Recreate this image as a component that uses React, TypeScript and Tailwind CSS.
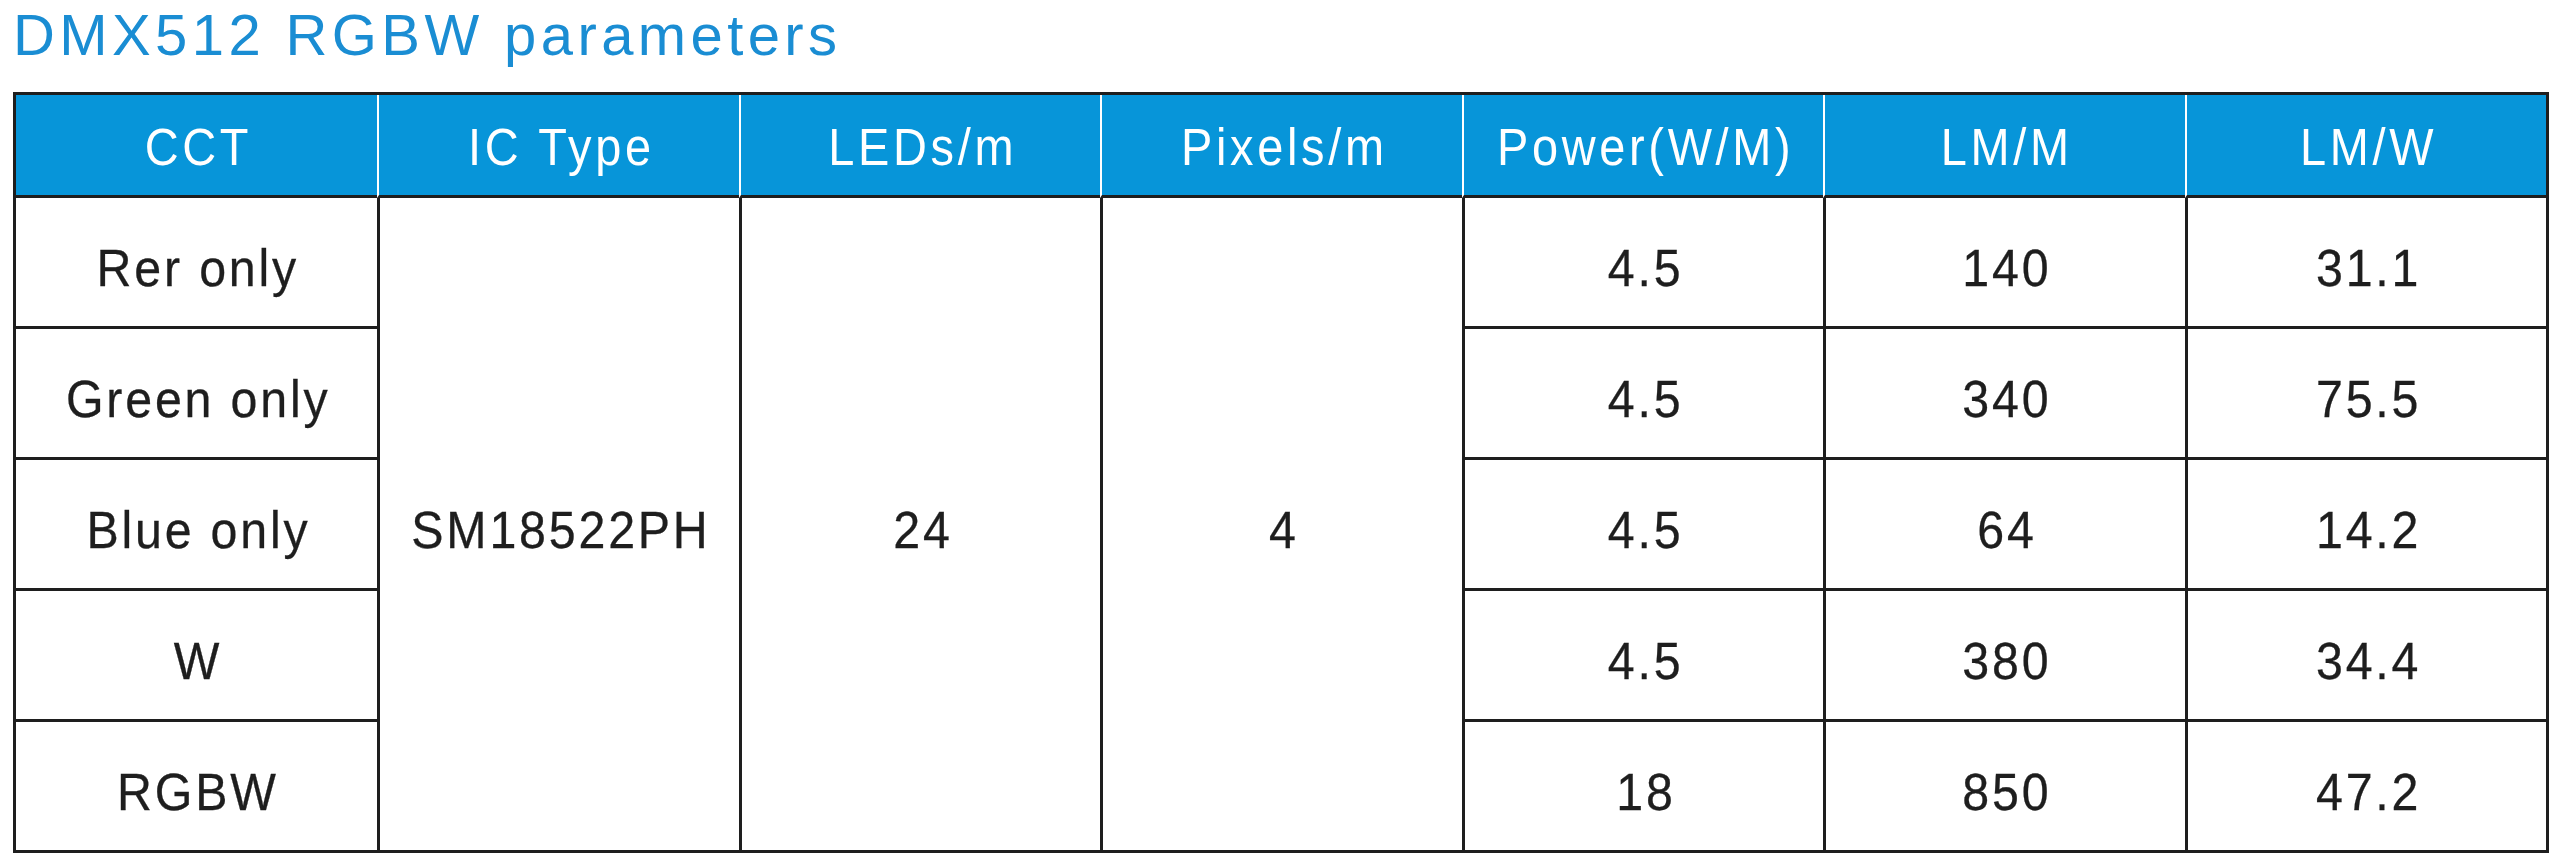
import React from "react";

const headers = ["CCT", "IC Type", "LEDs/m", "Pixels/m", "Power(W/M)", "LM/M", "LM/W"];
const rows = [
  { cct: "Rer only", p: "4.5", lm: "140", lmw: "31.1" },
  { cct: "Green only", p: "4.5", lm: "340", lmw: "75.5" },
  { cct: "Blue only", p: "4.5", lm: "64", lmw: "14.2" },
  { cct: "W", p: "4.5", lm: "380", lmw: "34.4" },
  { cct: "RGBW", p: "18", lm: "850", lmw: "47.2" },
];

const rowStarts = ["row-start-2", "row-start-3", "row-start-4", "row-start-5", "row-start-6"];

function T({ children }: { children: React.ReactNode }) {
  return (
    <span className="inline-block whitespace-nowrap [transform:scaleX(0.93)] mr-[-3px]">{children}</span>
  );
}

function H({ children }: { children: React.ReactNode }) {
  return (
    <span className="inline-block whitespace-nowrap [transform:scaleX(0.92)] mr-[-4px]">{children}</span>
  );
}

const bodyText =
  "flex items-center justify-center text-[52px] leading-none tracking-[3px] pt-[11px] [-webkit-text-stroke:0.3px_#1e1e1e]";

export default function App() {
  return (
    <div
      className="w-[2560px] h-[868px] bg-white pl-[13px] pt-[6px]"
      style={{ fontFamily: '"Liberation Sans", Arial, sans-serif' }}
    >
      <h1 className="text-[58px] leading-[58px] tracking-[4.4px] text-[#1a8dd3] font-normal">
        DMX512 RGBW parameters
      </h1>
      <div className="mt-[28px] w-[2536px] border-[3px] border-[#1e1e1e]">
        <div className="grid grid-cols-7 grid-rows-[103px_128px_131px_131px_131px_131px] text-[#1e1e1e]">
          {headers.map((h, i) => (
            <div
              key={h}
              className={
                "row-start-1 flex items-center justify-center bg-[#0795d9] text-white text-[51px] leading-none tracking-[4px] pt-[5px] border-b-[3px] border-b-[#1e1e1e] " +
                (i > 0 ? "border-l-2 border-l-white" : "")
              }
            >
              <H>{h}</H>
            </div>
          ))}
          {rows.map((r, ri) => (
            <React.Fragment key={r.cct}>
              <div
                className={
                  "col-start-1 " + bodyText + " " +
                  rowStarts[ri] +
                  (ri > 0 ? " border-t-[3px] border-t-[#1e1e1e]" : "")
                }
              >
                <T>{r.cct}</T>
              </div>
              <div
                className={
                  "col-start-5 border-l-[3px] border-l-[#1e1e1e] " + bodyText + " " +
                  rowStarts[ri] +
                  (ri > 0 ? " border-t-[3px] border-t-[#1e1e1e]" : "")
                }
              >
                <T>{r.p}</T>
              </div>
              <div
                className={
                  "col-start-6 border-l-[3px] border-l-[#1e1e1e] " + bodyText + " " +
                  rowStarts[ri] +
                  (ri > 0 ? " border-t-[3px] border-t-[#1e1e1e]" : "")
                }
              >
                <T>{r.lm}</T>
              </div>
              <div
                className={
                  "col-start-7 border-l-[3px] border-l-[#1e1e1e] " + bodyText + " " +
                  rowStarts[ri] +
                  (ri > 0 ? " border-t-[3px] border-t-[#1e1e1e]" : "")
                }
              >
                <T>{r.lmw}</T>
              </div>
            </React.Fragment>
          ))}
          <div className={"col-start-2 row-start-2 row-span-5 border-l-[3px] border-l-[#1e1e1e] " + bodyText}>
            <T>SM18522PH</T>
          </div>
          <div className={"col-start-3 row-start-2 row-span-5 border-l-[3px] border-l-[#1e1e1e] " + bodyText}>
            <T>24</T>
          </div>
          <div className={"col-start-4 row-start-2 row-span-5 border-l-[3px] border-l-[#1e1e1e] " + bodyText}>
            <T>4</T>
          </div>
        </div>
      </div>
    </div>
  );
}
